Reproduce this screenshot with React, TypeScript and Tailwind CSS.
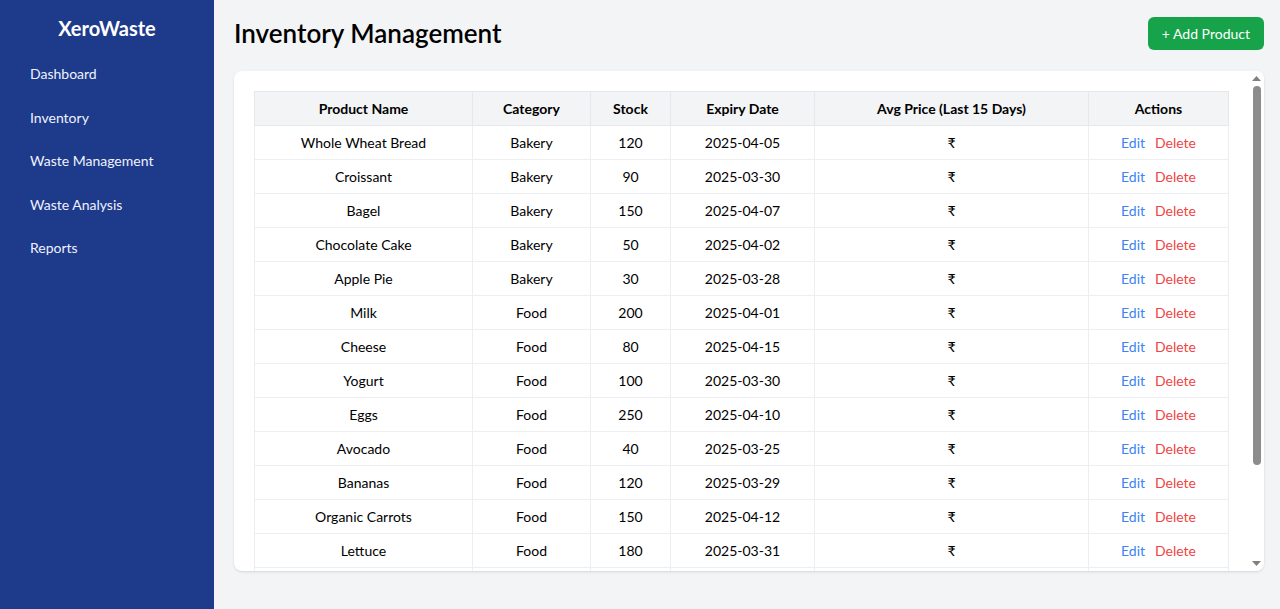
type Product = {
  name: string;
  category: string;
  stock: number;
  expiry: string;
};

const products: Product[] = [
  { name: "Whole Wheat Bread", category: "Bakery", stock: 120, expiry: "2025-04-05" },
  { name: "Croissant", category: "Bakery", stock: 90, expiry: "2025-03-30" },
  { name: "Bagel", category: "Bakery", stock: 150, expiry: "2025-04-07" },
  { name: "Chocolate Cake", category: "Bakery", stock: 50, expiry: "2025-04-02" },
  { name: "Apple Pie", category: "Bakery", stock: 30, expiry: "2025-03-28" },
  { name: "Milk", category: "Food", stock: 200, expiry: "2025-04-01" },
  { name: "Cheese", category: "Food", stock: 80, expiry: "2025-04-15" },
  { name: "Yogurt", category: "Food", stock: 100, expiry: "2025-03-30" },
  { name: "Eggs", category: "Food", stock: 250, expiry: "2025-04-10" },
  { name: "Avocado", category: "Food", stock: 40, expiry: "2025-03-25" },
  { name: "Bananas", category: "Food", stock: 120, expiry: "2025-03-29" },
  { name: "Organic Carrots", category: "Food", stock: 150, expiry: "2025-04-12" },
  { name: "Lettuce", category: "Food", stock: 180, expiry: "2025-03-31" },
  { name: "Tomatoes", category: "Food", stock: 140, expiry: "2025-04-03" },
  { name: "Spinach", category: "Food", stock: 60, expiry: "2025-03-27" },
  { name: "Apples", category: "Food", stock: 220, expiry: "2025-04-20" },
];

const navItems = ["Dashboard", "Inventory", "Waste Management", "Waste Analysis", "Reports"];

function Sidebar() {
  return (
    <aside className="w-[214px] shrink-0 bg-[#1e3a8a] text-white min-h-screen px-4 pt-[14px]">
      <h1 className="text-[20px] leading-7 font-bold text-center">XeroWaste</h1>
      <nav className="mt-[10px] flex flex-col">
        {navItems.map((item) => (
          <a key={item} className="px-[14px] py-3 text-sm leading-[19.5px] text-[#eef2ff] cursor-pointer">
            {item}
          </a>
        ))}
      </nav>
    </aside>
  );
}

// drawn scrollbar (the headless browser hides real ones)
function ScrollBar() {
  return (
    <div className="w-[15px] shrink-0 flex flex-col bg-white">
      <div className="h-[15px] flex items-center justify-center">
        <svg width="9" height="5" viewBox="0 0 9 5">
          <path d="M4.5 0 L9 5 L0 5 Z" fill="#808080" />
        </svg>
      </div>
      <div className="flex-1 flex flex-col items-center">
        <div className="w-2 h-[379px] rounded-full bg-[#8c8c8c]" />
      </div>
      <div className="h-[15px] flex items-center justify-center">
        <svg width="9" height="5" viewBox="0 0 9 5">
          <path d="M0 0 L9 0 L4.5 5 Z" fill="#808080" />
        </svg>
      </div>
    </div>
  );
}

export default function App() {
  return (
    <div className="flex min-h-screen bg-[#f3f4f6] font-['Lato','Noto_Sans',sans-serif] text-black">
      <Sidebar />
      <main className="flex-1 pl-5 pr-4 pt-[17px]">
        <div className="flex items-center justify-between mb-[21px]">
          <h2 className="text-[26px] leading-[33px] font-semibold">Inventory Management</h2>
          <button className="h-[33px] px-[14px] rounded-md bg-[#16a34a] text-white text-sm">
            + Add Product
          </button>
        </div>
        <div className="h-[500px] flex bg-white rounded-lg shadow-sm overflow-hidden">
          <div className="flex-1 overflow-hidden p-5">
            <table className="w-full border-collapse text-center text-sm border border-[#e5e7eb]">
              <thead className="bg-[#f3f4f6]">
                <tr className="h-[34px]">
                  <th className="w-[218px] border border-[#e5e7eb] font-bold">Product Name</th>
                  <th className="w-[118px] border border-[#e5e7eb] font-bold">Category</th>
                  <th className="w-[80px] border border-[#e5e7eb] font-bold">Stock</th>
                  <th className="w-[144px] border border-[#e5e7eb] font-bold">Expiry Date</th>
                  <th className="w-[274px] border border-[#e5e7eb] font-bold">Avg Price (Last 15 Days)</th>
                  <th className="border border-[#e5e7eb] font-bold">Actions</th>
                </tr>
              </thead>
              <tbody>
                {products.map((p) => (
                  <tr key={p.name} className="h-[34px]">
                    <td className="border border-[#eceef1]">{p.name}</td>
                    <td className="border border-[#eceef1]">{p.category}</td>
                    <td className="border border-[#eceef1]">{p.stock}</td>
                    <td className="border border-[#eceef1]">{p.expiry}</td>
                    <td className="border border-[#eceef1]">₹</td>
                    <td className="border border-[#eceef1]">
                      <button className="text-[#3b82f6] mr-[10px]">Edit</button>
                      <button className="text-[#ef4444]">Delete</button>
                    </td>
                  </tr>
                ))}
              </tbody>
            </table>
          </div>
          <ScrollBar />
        </div>
      </main>
    </div>
  );
}
